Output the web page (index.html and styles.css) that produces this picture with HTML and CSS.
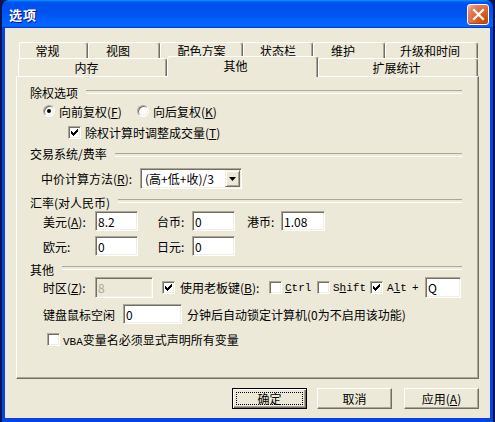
FILE: index.html
```html
<!DOCTYPE html>
<html>
<head>
<meta charset="utf-8">
<link rel="stylesheet" href="styles.css">
</head>
<body>

<div class="window">
  <div class="titlebar">
    <span class="title">选项</span>
    <span class="close">
      <svg width="13" height="13" viewBox="0 0 13 13"><path d="M2 2 L11 11 M11 2 L2 11" stroke="#fff" stroke-width="2.2" stroke-linecap="square"/></svg>
    </span>
  </div>

  <div class="client">
    <div class="tab-row row-top">
      <div class="tab">常规</div>
      <div class="tab">视图</div>
      <div class="tab">配色方案</div>
      <div class="tab">状态栏</div>
      <div class="tab">维护</div>
      <div class="tab">升级和时间</div>
    </div>
    <div class="tab-row row-bottom">
      <div class="tab">内存</div>
      <div class="tab selected">其他</div>
      <div class="tab">扩展统计</div>
    </div>

    <div class="panel">
      <div class="group">除权选项</div>

      <div class="row row-radios">
        <span class="radio-item"><span class="radio on"></span>向前复权(<u>F</u>)</span>
        <span class="radio-item"><span class="radio"></span>向后复权(<u>K</u>)</span>
      </div>

      <div class="row row-adjust">
        <span class="check on"><svg width="9" height="9" viewBox="0 0 9 9"><path d="M1 3h1v1h1v1h1v-1h1v-1h1v-1h1v-1h1v3h-1v1h-1v1h-1v1h-1v1h-1v-1h-1v-1h-1z" fill="#000"/></svg></span>
        <span class="check-text">除权计算时调整成交量(<u>T</u>)</span>
      </div>

      <div class="group group-trade">交易系统/费率</div>

      <div class="row row-mid">
        <span class="lbl lbl-mid">中价计算方法(<u>R</u>):</span>
        <div class="combo">
          <span class="combo-text">(高+低+收)/3</span>
          <span class="combo-btn"><svg width="7" height="4" viewBox="0 0 7 4"><path d="M0 0h7l-3.5 4z" fill="#000"/></svg></span>
        </div>
      </div>

      <div class="group group-rate">汇率(对人民币)</div>

      <div class="row row-rate1">
        <span class="lbl lbl-cur">美元(<u>A</u>):</span>
        <span class="field f-rate">8.2</span>
        <span class="lbl lbl-cur2">台币:</span>
        <span class="field f-rate">0</span>
        <span class="lbl lbl-cur3">港币:</span>
        <span class="field f-rate f-hk">1.08</span>
      </div>

      <div class="row row-rate2">
        <span class="lbl lbl-cur">欧元:</span>
        <span class="field f-rate">0</span>
        <span class="lbl lbl-cur2">日元:</span>
        <span class="field f-rate">0</span>
      </div>

      <div class="group group-other">其他</div>

      <div class="row row-tz">
        <span class="lbl lbl-cur">时区(<u>Z</u>):</span>
        <span class="field f-tz disabled">8</span>
        <span class="check on c-boss"><svg width="9" height="9" viewBox="0 0 9 9"><path d="M1 3h1v1h1v1h1v-1h1v-1h1v-1h1v-1h1v3h-1v1h-1v1h-1v1h-1v1h-1v-1h-1v-1h-1z" fill="#000"/></svg></span>
        <span class="key-text t-boss">使用老板键(<u>B</u>):</span>
        <span class="check"></span>
        <span class="key-text mono t-ctrl"><u>C</u>trl</span>
        <span class="check"></span>
        <span class="key-text mono t-shift">S<u>h</u>ift</span>
        <span class="check on"><svg width="9" height="9" viewBox="0 0 9 9"><path d="M1 3h1v1h1v1h1v-1h1v-1h1v-1h1v-1h1v3h-1v1h-1v1h-1v1h-1v1h-1v-1h-1v-1h-1z" fill="#000"/></svg></span>
        <span class="key-text mono t-alt">A<u>l</u>t</span>
        <span class="key-text mono t-plus">+</span>
        <span class="field f-key">Q</span>
      </div>

      <div class="row row-idle">
        <span class="lbl lbl-idle">键盘鼠标空闲</span>
        <span class="field f-idle">0</span>
        <span class="idle-text">分钟后自动锁定计算机(0为不启用该功能)</span>
      </div>

      <div class="row row-vba">
        <span class="check"></span>
        <span class="vba-text"><span class="mono">VBA</span>变量名必须显式声明所有变量</span>
      </div>
    </div>

    <div class="buttons">
      <div class="btn default"><span class="focus">确定</span></div>
      <div class="btn">取消</div>
      <div class="btn">应用(<u>A</u>)</div>
    </div>
  </div>
</div>

</body>
</html>
```

FILE: styles.css
```css
* {
  box-sizing: border-box;
}

body {
  margin: 0;
  background: #0b1450;
  font-family: "Noto Sans CJK SC", "Noto Sans", sans-serif;
  font-size: 12px;
  color: #000;
}

u {
  text-decoration: underline;
  text-underline-offset: 1px;
}

.mono {
  font-family: "Liberation Mono", monospace;
  font-size: 11px;
}

/* Window frame */
.window {
  margin-left: 2px;
  width: 491px;
  height: 422px;
  display: flex;
  flex-direction: column;
}

.titlebar {
  height: 28px;
  flex: none;
  display: flex;
  align-items: center;
  justify-content: space-between;
  padding: 0 4px 0 7px;
  border-radius: 7px 7px 0 0;
  background: linear-gradient(180deg, #0997ff, #0053ee 8%, #0050ee 40%, #0066ff 88%, #0066ff 93%, #005bff 95%, #003dd7 96%, #003dd7);
}

.title {
  color: #fff;
  font-weight: bold;
  font-size: 13px;
  letter-spacing: 1px;
  text-shadow: 1px 1px #0f1089;
  padding-top: 1px;
}

.close {
  width: 22px;
  height: 21px;
  margin-top: 1px;
  display: flex;
  align-items: center;
  justify-content: center;
  border: 1px solid #fff;
  border-radius: 3px;
  background: radial-gradient(circle at 85% 85%, #cc4600 0, #dc6527 45%, #e2806a 75%, #f6c6b6 100%);
  box-shadow: inset 0 -1px 1px #b43d1e;
}

.client {
  flex: 1;
  background: #ece9d8;
  border: 3px solid #0842e3;
  border-top: 0;
  border-bottom-width: 4px;
  padding: 14px 11px 0 11px;
}

/* Tabs */
.tab-row {
  display: flex;
}

.row-top {
  height: 16px;
  margin-left: 3px;
}

.row-bottom {
  height: 18px;
  margin-left: 2px;
  align-items: flex-end;
}

.tab {
  height: 100%;
  display: flex;
  align-items: center;
  justify-content: center;
  background: #ece9d8;
  border: 1px solid #fff;
  border-bottom: 0;
  border-right-color: #716f64;
  border-radius: 3px 3px 0 0;
  box-shadow: inset -1px 0 #aca899;
  line-height: 1;
}

.row-top .tab:nth-child(1) { width: 69px; padding-right: 12px; }
.row-top .tab:nth-child(2) { width: 72px; padding-right: 12px; }
.row-top .tab:nth-child(3) { width: 83px; }
.row-top .tab:nth-child(4) { width: 70px; }
.row-top .tab:nth-child(5) { width: 72px; padding-right: 12px; }
.row-top .tab:nth-child(6) { width: 93px; padding-right: 3px; }

.row-bottom .tab:nth-child(1) { width: 149px; padding-right: 12px; }
.row-bottom .tab:nth-child(2) { width: 151px; padding-right: 14px; }
.row-bottom .tab:nth-child(3) { width: 160px; padding-right: 3px; }

.tab.selected {
  height: 21px;
  margin-bottom: -1px;
  padding-bottom: 3px;
  position: relative;
  z-index: 1;
}

/* Page panel */
.panel {
  height: 303px;
  border: 1px solid #fff;
  border-right-color: #716f64;
  border-bottom-color: #716f64;
  box-shadow: inset -1px -1px #aca899;
  padding: 6px 16px 0 13px;
}

.group {
  height: 18px;
  display: flex;
  align-items: center;
}

.group::after {
  content: "";
  flex: 1;
  height: 2px;
  margin-left: 8px;
  border-top: 1px solid #aca899;
  border-bottom: 1px solid #fff;
}

.group-trade { margin-top: 3px; }
.group-trade::after { margin-top: 4px; }
.group-rate { margin-top: 4px; }
.group-rate::after { margin-top: -3px; }
.group-other { margin-top: 5px; height: 16px; }
.group-other::after { margin-top: -3px; }

.row {
  display: flex;
  align-items: center;
  white-space: nowrap;
}

.row-radios {
  height: 18px;
  margin-top: 1px;
  padding-left: 13px;
}

.radio-item {
  width: 94px;
  display: flex;
  align-items: center;
}

.radio {
  width: 12px;
  height: 12px;
  margin-right: 4px;
  border-radius: 50%;
  background: #fff;
  border: 1px solid;
  border-color: #aca899 #fff #fff #aca899;
  box-shadow: inset 1px 1px #716f64, inset -1px -1px #f1efe2;
  display: flex;
  align-items: center;
  justify-content: center;
}

.radio.on::after {
  content: "";
  width: 4px;
  height: 4px;
  border-radius: 50%;
  background: #000;
}

.check {
  width: 13px;
  height: 13px;
  flex: none;
  background: #fff;
  border: 1px solid;
  border-color: #aca899 #fff #fff #aca899;
  box-shadow: inset 1px 1px #716f64, inset -1px -1px #f1efe2;
  padding: 1px;
}

.check svg {
  display: block;
  shape-rendering: crispEdges;
}

.row-adjust {
  height: 18px;
  margin-top: 3px;
  padding-left: 38px;
}

.check-text {
  margin-left: 4px;
}

.row-mid {
  height: 21px;
  margin-top: 6px;
  padding-left: 11px;
}

.lbl-mid {
  width: 99px;
}

.combo {
  width: 102px;
  height: 21px;
  display: flex;
  align-items: center;
  justify-content: space-between;
  background: #fff;
  border: 1px solid;
  border-color: #aca899 #fff #fff #aca899;
  box-shadow: inset 1px 1px #716f64, inset -1px -1px #f1efe2;
  padding: 1px 1px 1px 4px;
}

.combo-btn {
  width: 15px;
  height: 17px;
  display: flex;
  align-items: center;
  justify-content: center;
  background: #ece9d8;
  border: 1px solid;
  border-color: #f1efe2 #716f64 #716f64 #f1efe2;
  box-shadow: inset 1px 1px #fff, inset -1px -1px #aca899;
}

.field {
  height: 20px;
  display: flex;
  align-items: center;
  background: #fff;
  border: 1px solid;
  border-color: #aca899 #fff #fff #aca899;
  box-shadow: inset 1px 1px #716f64, inset -1px -1px #f1efe2;
  padding-left: 2px;
}

.field.disabled {
  background: #ece9d8;
  color: #aca899;
}

.row-rate1 {
  height: 20px;
  padding-left: 13px;
}

.row-rate2 {
  height: 20px;
  margin-top: 5px;
  padding-left: 13px;
}

.lbl-cur { width: 52px; }
.lbl-cur2 { width: 35px; margin-left: 19px; }
.lbl-cur3 { width: 34px; margin-left: 12px; }
.f-rate { width: 43px; }
.f-hk { width: 44px; }

.row-tz {
  height: 21px;
  padding-left: 13px;
}

.f-tz { width: 58px; height: 21px; }
.c-boss { margin-left: 9px; }
.key-text { margin-left: 3px; }
.t-boss { width: 89px; margin-left: 5px; }
.t-ctrl { width: 32px; }
.t-shift { width: 37px; }
.t-alt { width: 25px; margin-left: 4px; }
.t-plus { width: 13px; margin-left: 0; }
.f-key { width: 36px; height: 21px; }

.row-idle {
  height: 20px;
  margin-top: 6px;
  padding-left: 13px;
}

.lbl-idle { width: 80px; }
.f-idle { width: 59px; }
.idle-text { margin-left: 5px; }

.row-vba {
  height: 16px;
  margin-top: 7px;
  padding-left: 17px;
}

.vba-text {
  margin-left: 3px;
}

/* Dialog buttons */
.buttons {
  display: flex;
  justify-content: flex-end;
  margin-top: 9px;
}

.btn {
  width: 75px;
  height: 21px;
  margin-left: 12px;
  display: flex;
  align-items: center;
  justify-content: center;
  background: #ece9d8;
  border: 1px solid;
  border-color: #fff #716f64 #716f64 #fff;
  box-shadow: inset -1px -1px #aca899;
}

.btn:nth-child(2) {
  margin-left: 10px;
}

.btn.default {
  border: 1px solid #000;
  box-shadow: inset 1px 1px #fff, inset -1px -1px #716f64, inset -2px -2px #aca899;
  padding: 3px;
}

.focus {
  width: 100%;
  height: 100%;
  display: flex;
  align-items: center;
  justify-content: center;
  border: 1px dotted #000;
}
```
